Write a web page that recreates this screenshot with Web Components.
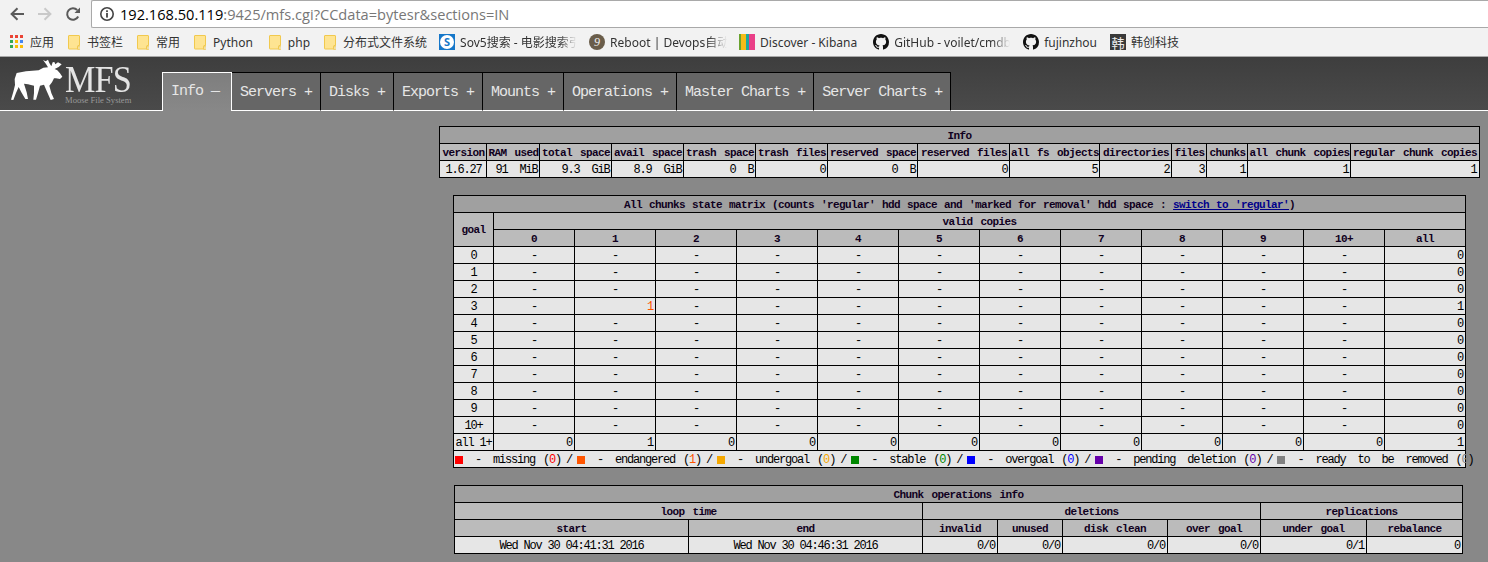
<!DOCTYPE html>
<html>
<head>
<meta charset="utf-8">
<title>MFS</title>
<style>
html, body { margin: 0; padding: 0; background: #888; height: 562px; overflow: hidden; }
</style>
</head>
<body>
<browser-toolbar host="192.168.50.119" rest=":9425/mfs.cgi?CCdata=bytesr&amp;sections=IN"></browser-toolbar>
<bookmark-bar>
    <bookmark-item icon="apps" gap="7" after="14">应用</bookmark-item>
    <bookmark-item icon="folder" gap="7" after="14">书签栏</bookmark-item>
    <bookmark-item icon="folder" gap="7" after="14">常用</bookmark-item>
    <bookmark-item icon="folder" gap="7" after="16">Python</bookmark-item>
    <bookmark-item icon="folder" gap="7" after="14">php</bookmark-item>
    <bookmark-item icon="folder" gap="7" after="12">分布式文件系统</bookmark-item>
    <bookmark-item icon="sov" gap="5" after="12" clip="117">Sov5搜索 - 电影搜索引擎</bookmark-item>
    <bookmark-item icon="reboot" gap="5" after="12" clip="117">Reboot | Devops自动化</bookmark-item>
    <bookmark-item icon="kibana" gap="5" after="16">Discover - Kibana</bookmark-item>
    <bookmark-item icon="github" gap="5" after="13" clip="116">GitHub - voilet/cmdb</bookmark-item>
    <bookmark-item icon="github" gap="5" after="13">fujinzhou</bookmark-item>
    <bookmark-item icon="han" gap="5" after="0">韩创科技</bookmark-item>
</bookmark-bar>
<mfs-header>
    <mfs-tab active>Info &#8212;</mfs-tab>
    <mfs-tab>Servers +</mfs-tab>
    <mfs-tab>Disks +</mfs-tab>
    <mfs-tab>Exports +</mfs-tab>
    <mfs-tab>Mounts +</mfs-tab>
    <mfs-tab>Operations +</mfs-tab>
    <mfs-tab>Master Charts +</mfs-tab>
    <mfs-tab>Server Charts +</mfs-tab>
</mfs-header>
<mfs-content>
    <info-table></info-table>
    <matrix-table></matrix-table>
    <chunkops-table style="margin-right:2px"></chunkops-table>
</mfs-content>

<script>
(() => {
    const tableCss = `
    :host { display: block; }
    table {
        border-collapse: collapse;
        table-layout: fixed;
        font-family: "Liberation Mono", "DejaVu Sans Mono", monospace;
        font-size: 11px;
        letter-spacing: -0.6px;
        color: #000;
        border: 1px solid #000;
    }
    tr { height: 17px; }
    th, td {
        border: 1px solid #000;
        padding: 1px 2px 0;
        height: 15px;
        line-height: 14px;
        white-space: nowrap;
        overflow: visible;
    }
    th { background: #bbb; font-weight: bold; text-align: center; word-spacing: 2px; color: #100020; }
    th.title { background: #a0a0a0; }
    td { background: #e6e6e6; font-weight: normal; font-size: 12px; letter-spacing: -1.2px; text-align: right; word-spacing: 6px; }
    td.c { text-align: center; }
    td.date { word-spacing: 0; text-align: center; }
    a { color: #00008b; }
    `;

    // cols is a list of pixel widths, the rest of the table comes as rows of html
    function tableHtml(cols, body) {
        let colgroup = cols.map(w => `<col style="width:${w}px">`).join("");
        let total = cols.reduce((a, b) => a + b, 0) + 1;
        return `<style>${tableCss}</style><table style="width:${total}px"><colgroup>${colgroup}</colgroup>${body}</table>`;
    }

    class InfoTable extends HTMLElement {
        constructor() {
            super();
            this.attachShadow({mode: 'open'});
        }
        connectedCallback() {
            let heads = ["version", "RAM used", "total space", "avail space", "trash space", "trash files", "reserved space", "reserved files", "all fs objects", "directories", "files", "chunks", "all chunk copies", "regular chunk copies"];
            let vals = ["1.6.27", "91 MiB", "9.3 GiB", "8.9 GiB", "0 B", "0", "0 B", "0", "5", "2", "3", "1", "1", "1"];
            let body = `<tr><th class="title" colspan="14">Info</th></tr>`;
            body += `<tr>${heads.map(h => `<th style="padding:1px 0 0">${h}</th>`).join("")}</tr>`;
            body += `<tr>${vals.map((v, i) => `<td${i == 0 ? ' class="date"' : ''}>${v}</td>`).join("")}</tr>`;
            this.shadowRoot.innerHTML = tableHtml([47, 53, 72, 72, 72, 72, 90, 92, 90, 72, 35, 41, 103, 128], body);
        }
    }

    class MatrixTable extends HTMLElement {
        constructor() {
            super();
            this.attachShadow({mode: 'open'});
        }
        connectedCallback() {
            let labels = ["0", "1", "2", "3", "4", "5", "6", "7", "8", "9", "10+"];
            let body = `<tr><th class="title" colspan="13" style="word-spacing:1px">All chunks state matrix (counts 'regular' hdd space and 'marked for removal' hdd space : <a href="#">switch to 'regular'</a>)</th></tr>`;
            body += `<tr><th rowspan="2">goal</th><th colspan="12">valid copies</th></tr>`;
            body += `<tr>${labels.concat("all").map(l => `<th>${l}</th>`).join("")}</tr>`;
            labels.forEach((label, row) => {
                let cells = "";
                for (let c = 0; c < 11; c++) {
                    if (row == 3 && c == 1) cells += `<td style="color:#f50">1</td>`;
                    else cells += `<td class="c">-</td>`;
                }
                body += `<tr><td class="c">${label}</td>${cells}<td>${row == 3 ? 1 : 0}</td></tr>`;
            });
            let totals = [0, 1, 0, 0, 0, 0, 0, 0, 0, 0, 0, 1];
            body += `<tr><td class="c" style="word-spacing:0;padding:1px 0 0">all 1+</td>${totals.map(t => `<td>${t}</td>`).join("")}</tr>`;
            let legend = [
                ["#f00", "missing", 0],
                ["#f50", "endangered", 1],
                ["#f5a800", "undergoal", 0],
                ["#080", "stable", 0],
                ["#00f", "overgoal", 0],
                ["#60a", "pending deletion", 0],
                ["#808080", "ready to be removed", 0]
            ].map(([color, name, n], i) =>
                `<span class="sw${i ? " next" : ""}" style="background:${color}"></span> - ${name}<span class="n">(<span style="color:${color}">${n}</span>)</span>`
            ).join(`<span class="sep">/</span>`);
            body += `<tr><td colspan="13" class="legend">${legend}</td></tr>`;
            let cols = [40].concat(new Array(12).fill(81));
            this.shadowRoot.innerHTML = tableHtml(cols, body) + `<style>
                td.legend { text-align: left; padding: 1px 1px 0; }
                .sw { display: inline-block; width: 8px; height: 8px; vertical-align: -1px; }
                .sw.next { margin-left: 5px; }
                .n { margin-left: 8px; }
                .sep { margin-left: 5px; }
            </style>`;
        }
    }

    class ChunkopsTable extends HTMLElement {
        constructor() {
            super();
            this.attachShadow({mode: 'open'});
        }
        connectedCallback() {
            let heads = ["start", "end", "invalid", "unused", "disk clean", "over goal", "under goal", "rebalance"];
            let vals = ["0/0", "0/0", "0/0", "0/0", "0/1", "0"];
            let body = `<tr><th class="title" colspan="8">Chunk operations info</th></tr>`;
            body += `<tr><th colspan="2">loop time</th><th colspan="4">deletions</th><th colspan="2">replications</th></tr>`;
            body += `<tr>${heads.map(h => `<th>${h}</th>`).join("")}</tr>`;
            body += `<tr><td class="date">Wed Nov 30 04:41:31 2016</td><td class="date">Wed Nov 30 04:46:31 2016</td>${vals.map(v => `<td>${v}</td>`).join("")}</tr>`;
            this.shadowRoot.innerHTML = tableHtml([234, 234, 75, 65, 105, 93, 106, 96], body);
        }
    }

    class MfsContent extends HTMLElement {
        constructor() {
            super();
            this.attachShadow({mode: 'open'});
            this.shadowRoot.innerHTML = `<style>
                :host {
                    display: flex;
                    flex-direction: column;
                    align-items: center;
                    gap: 17px;
                    padding: 15px 0 0 431px;
                    background: #888;
                }
            </style><slot></slot>`;
        }
    }

    class BrowserToolbar extends HTMLElement {
        constructor() {
            super();
            this.attachShadow({mode: 'open'});
        }
        connectedCallback() {
            this.shadowRoot.innerHTML = `<style>
                :host { display: flex; align-items: center; height: 28px; background: #f2f2f2; box-sizing: border-box; }
                .btn { width: 28px; display: flex; justify-content: center; align-items: center; }
                .nav { display: flex; padding-left: 3px; width: 91px; box-sizing: border-box; }
                .box {
                    flex: 1;
                    height: 28px;
                    box-sizing: border-box;
                    background: #fff;
                    border: 1px solid #a9a9a9;
                    border-right: none;
                    border-radius: 2px 0 0 2px;
                    display: flex;
                    align-items: center;
                    gap: 5px;
                    padding-left: 7px;
                    font: 14.6px "Open Sans", "Noto Sans", sans-serif;
                    color: #777;
                    white-space: nowrap;
                }
                .host { color: #000; }
            </style>
            <div class="nav">
                <div class="btn"><svg width="16" height="16" viewBox="0 0 16 16"><path d="M15 8H3M8.5 2.2L2.6 8l5.9 5.8" fill="none" stroke="#5a5a5a" stroke-width="2"/></svg></div>
                <div class="btn"><svg width="16" height="16" viewBox="0 0 16 16"><path d="M1 8h12M7.5 2.2L13.4 8l-5.9 5.8" fill="none" stroke="#c9c9c9" stroke-width="2"/></svg></div>
                <div class="btn"><svg width="16" height="16" viewBox="0 0 16 16"><path d="M13.2 10.5A5.8 5.8 0 1 1 12.2 4" fill="none" stroke="#5a5a5a" stroke-width="2"/><path d="M15 1.5V7H9.5z" fill="#5a5a5a"/></svg></div>
            </div>
            <div class="box">
                <svg width="16" height="16" viewBox="0 0 16 16"><circle cx="8" cy="8" r="6.2" fill="none" stroke="#444" stroke-width="1.6"/><rect x="7.1" y="7" width="1.8" height="4.6" fill="#444"/><rect x="7.1" y="4.3" width="1.8" height="1.8" fill="#444"/></svg>
                <span><span class="host">${this.getAttribute("host")}</span>${this.getAttribute("rest").replace("&", "&amp;")}</span>
            </div>`;
        }
    }

    class BookmarkBar extends HTMLElement {
        constructor() {
            super();
            this.attachShadow({mode: 'open'});
            this.shadowRoot.innerHTML = `<style>
                :host {
                    display: flex;
                    align-items: center;
                    height: 29px;
                    box-sizing: border-box;
                    padding-left: 10px;
                    background: #f2f2f2;
                    border-bottom: 1px solid #a8a8a8;
                    font: 12px "Noto Sans", "Noto Sans CJK SC", sans-serif;
                    color: #333;
                }
            </style><slot></slot>`;
        }
    }

    const bookmarkIcons = {
        apps: `<svg width="13" height="14" viewBox="0 0 13 14">
            <rect x="0" y="0" width="3" height="3" fill="#ea4335"/><rect x="5" y="0" width="3" height="3" fill="#ea4335"/><rect x="10" y="0" width="3" height="3" fill="#ea4335"/>
            <rect x="0" y="5" width="3" height="3" fill="#34a853"/><rect x="5" y="5" width="3" height="3" fill="#fbbc05"/><rect x="10" y="5" width="3" height="3" fill="#4285f4"/>
            <rect x="0" y="10" width="3" height="3" fill="#34a853"/><rect x="5" y="10" width="3" height="3" fill="#fbbc05"/><rect x="10" y="10" width="3" height="3" fill="#fbbc05"/></svg>`,
        folder: `<svg width="12" height="15" viewBox="0 0 12 15"><path d="M1 .5h10a.5.5 0 0 1 .5.5v9.5h-1.5v3.5h-9a.5.5 0 0 1-.5-.5V1a.5.5 0 0 1 .5-.5z" fill="#fee492" stroke="#f1c94e"/><rect x="9.5" y="11" width="2.5" height="3.5" rx=".8" fill="none" stroke="#f1c94e"/></svg>`,
        sov: `<span class="sq" style="background:#1677c9"><span class="ring">S</span></span>`,
        reboot: `<span class="sq" style="background:#6a5d4a;border-radius:50%;font:italic 12px 'Liberation Serif',serif">9</span>`,
        kibana: `<svg width="16" height="16" viewBox="0 0 16 16"><rect width="2" height="16" fill="#6aa32f"/><rect x="2" width="5" height="16" fill="#f4bd19"/><rect x="7" width="3" height="16" fill="#1ba9a0"/><rect x="10" width="6" height="16" fill="#ea3f88"/></svg>`,
        github: `<svg width="16" height="16" viewBox="0 0 16 16"><path fill="#111" d="M8 0C3.58 0 0 3.58 0 8c0 3.54 2.29 6.53 5.47 7.59.4.07.55-.17.55-.38 0-.19-.01-.82-.01-1.49-2.01.37-2.53-.49-2.69-.94-.09-.23-.48-.94-.82-1.13-.28-.15-.68-.52-.01-.53.63-.01 1.08.58 1.23.82.72 1.21 1.87.87 2.33.66.07-.52.28-.87.51-1.07-1.78-.2-3.64-.89-3.64-3.95 0-.87.31-1.59.82-2.15-.08-.2-.36-1.02.08-2.12 0 0 .67-.21 2.2.82.64-.18 1.32-.27 2-.27.68 0 1.36.09 2 .27 1.53-1.04 2.2-.82 2.2-.82.44 1.1.16 1.92.08 2.12.51.56.82 1.27.82 2.15 0 3.07-1.87 3.75-3.65 3.95.29.25.54.73.54 1.48 0 1.07-.01 1.93-.01 2.2 0 .21.15.46.55.38A8.013 8.013 0 0 0 16 8c0-4.42-3.58-8-8-8z"/></svg>`,
        han: `<span class="sq" style="background:#3a3a3a;font:13px 'Noto Sans CJK SC',sans-serif">韩</span>`
    };

    class BookmarkItem extends HTMLElement {
        constructor() {
            super();
            this.attachShadow({mode: 'open'});
        }
        connectedCallback() {
            let clip = this.getAttribute("clip");
            this.shadowRoot.innerHTML = `<style>
                :host {
                    display: flex;
                    align-items: center;
                    flex: none;
                    gap: ${this.getAttribute("gap")}px;
                    margin-right: ${this.getAttribute("after")}px;
                }
                .ic { display: flex; flex: none; }
                .sq { width: 16px; height: 16px; display: flex; align-items: center; justify-content: center; color: #eee; overflow: hidden; }
                .ring { width: 14px; height: 14px; border-radius: 50%; background: #fff; color: #1677c9; font: bold 11px/14px "Noto Sans", sans-serif; text-align: center; }
                .label { white-space: nowrap; overflow: hidden; }
                .label.clip {
                    width: ${clip}px;
                    -webkit-mask-image: linear-gradient(to right, #000 85%, transparent);
                    mask-image: linear-gradient(to right, #000 85%, transparent);
                }
            </style>
            <span class="ic">${bookmarkIcons[this.getAttribute("icon")]}</span>
            <span class="label${clip ? " clip" : ""}"><slot></slot></span>`;
        }
    }

    class MfsHeader extends HTMLElement {
        constructor() {
            super();
            this.attachShadow({mode: 'open'});
            this.shadowRoot.innerHTML = `<style>
                :host {
                    display: flex;
                    height: 54px;
                    box-sizing: border-box;
                    background: linear-gradient(#3e3e3e, #4a4a4a);
                    border-bottom: 1px solid #fff;
                    align-items: flex-end;
                }
                .logo { width: 162px; height: 53px; flex: none; display: flex; padding-left: 11px; box-sizing: border-box; }
                .moose { margin-top: 2px; flex: none; }
                .word { color: #e4e4e4; font-family: "Liberation Serif", serif; margin-left: 2px; width: 100px; }
                .big { font-size: 38px; line-height: 32px; margin-top: 6px; transform: scaleX(.9); transform-origin: left; white-space: nowrap; letter-spacing: -1px; }
                .small { font-size: 8.6px; line-height: 10px; color: #999; white-space: nowrap; }
                .tabs { display: flex; height: 39px; margin-bottom: -1px; }
            </style>
            <div class="logo">
                <svg class="moose" width="52" height="44" viewBox="35 88 156 132">
                    <path fill="#fff" d="M52 130 L80 125 L118 122 L132 114 L146 113 L140 103 L131 91 L139 95 L146 90 L150 100 L156 110 L160 98 L165 97 L168 104 L176 98 L187 104 L178 112 L166 118 L174 122 L182 131 L189 141 L182 148 L170 146 L164 146 L158 158 L150 168 L156 190 L164 208 L154 211 L142 184 L134 165 L122 168 L116 190 L110 210 L102 210 L104 190 L104 168 L86 164 L74 162 L82 188 L86 208 L78 208 L66 188 L58 172 L50 190 L42 211 L35 210 L42 186 L47 166 L46 148 Z"/>
                </svg>
                <div class="word"><div class="big">MFS</div><div class="small">Moose File System</div></div>
            </div>
            <div class="tabs"><slot></slot></div>`;
        }
    }

    class MfsTab extends HTMLElement {
        constructor() {
            super();
            this.attachShadow({mode: 'open'});
            this.shadowRoot.innerHTML = `<style>
                :host {
                    display: block;
                    box-sizing: border-box;
                    height: 39px;
                    padding: 0 8px;
                    background: #666;
                    border-top: 1px solid #000;
                    border-right: 1px solid #000;
                    border-bottom: 1px solid #fff;
                    font: 15px/39px "Liberation Mono", monospace;
                    letter-spacing: -1px;
                    color: #e6e6e6;
                    white-space: nowrap;
                }
                :host([active]) {
                    background: linear-gradient(#7e7e7e, #888);
                    border: 1px solid #fff;
                    border-bottom: none;
                    padding: 0 12px 0 8px;
                    line-height: 37px;
                }
            </style><slot></slot>`;
        }
    }

    customElements.define("info-table", InfoTable);
    customElements.define("matrix-table", MatrixTable);
    customElements.define("chunkops-table", ChunkopsTable);
    customElements.define("mfs-content", MfsContent);
    customElements.define("browser-toolbar", BrowserToolbar);
    customElements.define("bookmark-bar", BookmarkBar);
    customElements.define("bookmark-item", BookmarkItem);
    customElements.define("mfs-header", MfsHeader);
    customElements.define("mfs-tab", MfsTab);
})();
</script>
</body>
</html>
